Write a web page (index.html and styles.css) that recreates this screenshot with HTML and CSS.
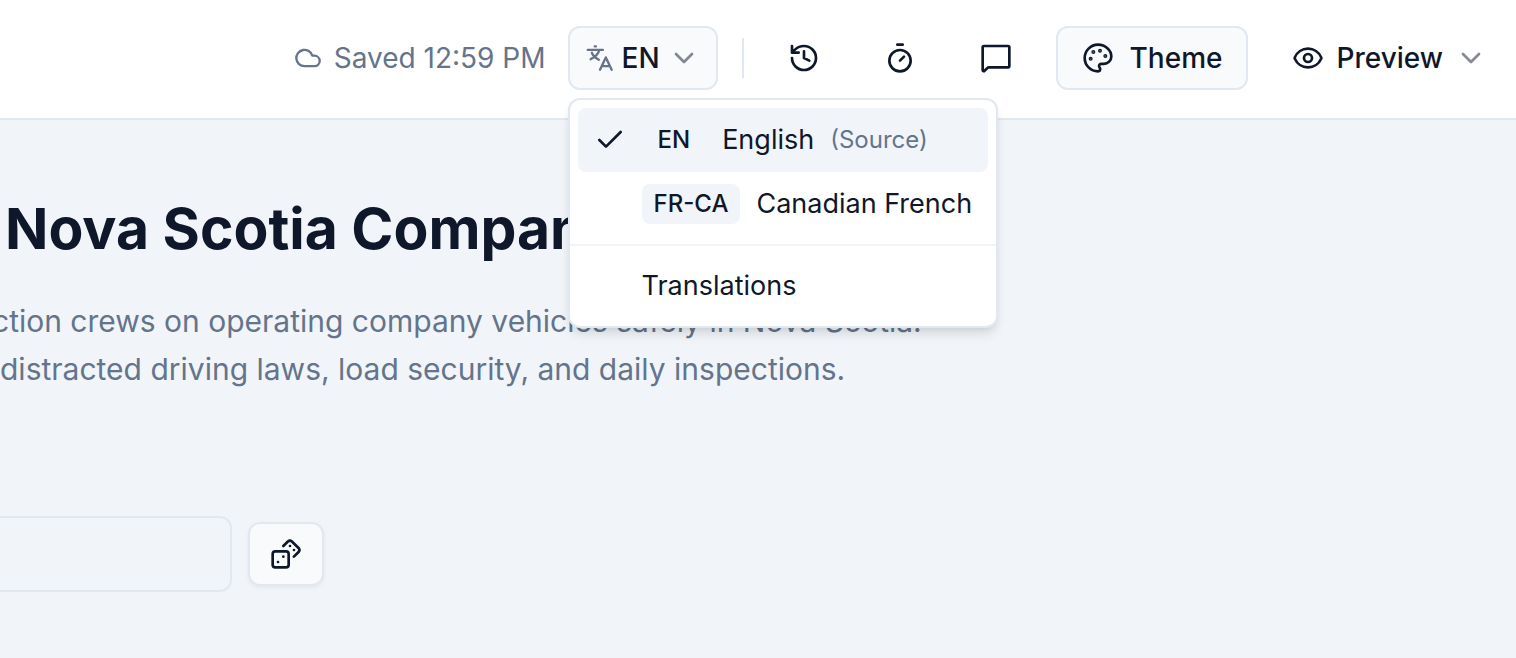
FILE: index.html
```html
<!DOCTYPE html>
<html lang="en">
<head>
<meta charset="utf-8">
<title>Course editor</title>
<link rel="stylesheet" href="styles.css">
</head>
<body>
<header class="topbar">
  <div class="saved">
    <svg class="icon icon-cloud" viewBox="0 0 24 24"><path d="M17.500 19H9a7 7 0 1 1 6.710-9h1.790a4.500 4.500 0 1 1 0 9Z"/></svg>
    <span>Saved 12:59 PM</span>
  </div>
  <div class="language">
    <button type="button" class="btn btn-lang" aria-haspopup="menu" aria-expanded="true">
      <svg class="icon icon-translate" viewBox="0 0 24 24"><path d="M1.500 5H14.500M7.500 2H8.500M11.500 5C10.500 9 7.500 11.500 4 13M5 7.500C6 10 8 12 11 13.500M12 22L17 11.500L22 22M13.500 19H20.500"/></svg>
      <span>EN</span>
      <svg class="icon chevron" viewBox="0 0 24 24"><path d="m6 9 6 6 6-6"/></svg>
    </button>
    <div class="menu" role="menu">
      <div class="menu-group">
        <button type="button" class="menu-item selected" role="menuitemradio" aria-checked="true">
          <svg class="icon check" viewBox="0 0 24 24"><path d="M20 6 9 17l-5-5"/></svg>
          <span class="badge">EN</span>
          <span>English</span>
          <span class="source">(Source)</span>
        </button>
        <button type="button" class="menu-item" role="menuitemradio" aria-checked="false">
          <span class="check"></span>
          <span class="badge">FR-CA</span>
          <span>Canadian French</span>
        </button>
      </div>
      <div class="menu-group">
        <button type="button" class="menu-item" role="menuitem">
          <span class="check"></span>
          <span>Translations</span>
        </button>
      </div>
    </div>
  </div>
  <span class="divider"></span>
  <div class="tools">
    <button type="button" class="btn btn-icon" aria-label="History">
      <svg class="icon" viewBox="0 0 24 24"><path d="M3 12a9 9 0 1 0 9-9 9.750 9.750 0 0 0-6.740 2.740L3 8M3 3v5h5M12 7v5l4 2"/></svg>
    </button>
    <button type="button" class="btn btn-icon" aria-label="Timer">
      <svg class="icon" viewBox="0 0 24 24"><path d="M10 2h4M12 14l3-3"/><circle cx="12" cy="14" r="8"/></svg>
    </button>
    <button type="button" class="btn btn-icon" aria-label="Comments">
      <svg class="icon" viewBox="0 0 24 24"><path d="M22 18a1 1 0 0 1-1 1H6.500a1 1 0 0 0-.7.3l-2.400 2.300A.8.8 0 0 1 2 21.200V4a1 1 0 0 1 1-1h18a1 1 0 0 1 1 1z"/></svg>
    </button>
  </div>
  <button type="button" class="btn btn-theme">
    <svg class="icon" viewBox="0 0 24 24"><path d="M12 2C6.500 2 2 6.500 2 12s4.500 10 10 10c.926 0 1.648-.746 1.648-1.688 0-.437-.18-.835-.437-1.125-.29-.289-.438-.652-.438-1.125a1.640 1.640 0 0 1 1.668-1.668h1.996c3.051 0 5.555-2.503 5.555-5.554C21.965 6.012 17.461 2 12 2z"/><g fill="currentColor"><circle cx="13.500" cy="6.500" r=".5"/><circle cx="17.500" cy="10.500" r=".5"/><circle cx="6.500" cy="12.500" r=".5"/><circle cx="8.500" cy="7.500" r=".5"/></g></svg>
    <span>Theme</span>
  </button>
  <button type="button" class="btn btn-preview">
    <svg class="icon" viewBox="0 0 24 24"><path d="M2.062 12.348a1 1 0 0 1 0-.696 10.750 10.750 0 0 1 19.876 0 1 1 0 0 1 0 .696 10.750 10.750 0 0 1-19.876 0"/><circle cx="12" cy="12" r="3"/></svg>
    <span>Preview</span>
    <svg class="icon chevron" viewBox="0 0 24 24"><path d="m6 9 6 6 6-6"/></svg>
  </button>
</header>
<main class="page">
  <h1 class="title">Nova Scotia Compan</h1>
  <p class="summary">ction crews on operating company vehicles safely in Nova Scotia.<br>distracted driving laws, load security, and daily inspections.</p>
  <div class="field-row">
    <input class="field" type="text" aria-label="Name">
    <button type="button" class="btn btn-dice" aria-label="Randomize">
      <svg class="icon" viewBox="0 0 24 24"><rect x="2" y="10" width="12" height="12" rx="2"/><path d="m17.920 14 3.500-3.500a2.240 2.240 0 0 0 0-3l-5-4.920a2.240 2.240 0 0 0-3 0L10 6M6 18h.01M10 14h.01M15 6h.01M18 9h.01"/></svg>
    </button>
  </div>
</main>
</body>
</html>
```

FILE: styles.css
```css
* {
  box-sizing: border-box;
}

body {
  margin: 0;
  min-height: 100vh;
  background: #f1f5f9;
  color: #0f172a;
  font-family: Inter, "Liberation Sans", sans-serif;
  font-size: 28px;
  line-height: 40px;
  overflow-x: hidden;
}

button,
input {
  margin: 0;
  font: inherit;
  color: inherit;
}

.icon {
  flex: none;
  width: 32px;
  height: 32px;
  fill: none;
  stroke: currentColor;
  stroke-width: 2;
  stroke-linecap: round;
  stroke-linejoin: round;
}

.topbar {
  display: flex;
  align-items: center;
  justify-content: flex-end;
  height: 120px;
  padding: 0 27px 2px 0;
  background: #fff;
  border-bottom: 2px solid #e2e8f0;
}

.saved {
  display: flex;
  align-items: center;
  gap: 12px;
  margin-right: 22px;
  color: #64748b;
}

.icon-cloud {
  width: 28px;
  height: 28px;
}

.btn {
  display: flex;
  align-items: center;
  height: 64px;
  padding: 0 24px;
  border: 2px solid transparent;
  border-radius: 12px;
  background: transparent;
  font-weight: 500;
}

.language {
  position: relative;
}

.btn-lang {
  padding: 0 16px;
  background: #f8fafc;
  border-color: #e2e8f0;
}

.icon-translate {
  width: 28px;
  height: 28px;
  margin-right: 8px;
  color: #64748b;
}

.chevron {
  color: #0f172a;
  opacity: 0.5;
}

.btn-lang .chevron {
  margin-left: 8px;
}

.menu {
  position: absolute;
  top: 100%;
  left: 0;
  z-index: 10;
  margin-top: 8px;
  background: #fff;
  border: 2px solid #e2e8f0;
  border-radius: 12px;
  box-shadow: 0 8px 12px -2px rgb(0 0 0 / 10%), 0 4px 8px -4px rgb(0 0 0 / 10%);
}

.menu-group {
  padding: 8px;
}

.menu-group + .menu-group {
  border-top: 2px solid #f1f5f9;
}

.menu-item {
  display: flex;
  align-items: center;
  gap: 16px;
  width: 100%;
  height: 64px;
  padding: 0 16px;
  border: 0;
  border-radius: 8px;
  background: transparent;
  font-size: 27px;
  white-space: nowrap;
}

.menu-item.selected {
  background: #f1f5f9;
}

.check {
  width: 32px;
}

.badge {
  padding: 0 12px;
  border-radius: 8px;
  background: #f1f5f9;
  font-size: 24px;
  font-weight: 500;
}

.selected .badge {
  padding: 0 16px;
}

.source {
  color: #64748b;
  font-size: 24px;
}

.divider {
  width: 2px;
  height: 40px;
  margin: 0 12px 0 24px;
  background: #e2e8f0;
}

.tools {
  display: flex;
}

.btn-icon {
  justify-content: center;
  width: 96px;
}

.btn-theme {
  gap: 16px;
  margin-left: 12px;
  background: #f8fafc;
  border-color: #e2e8f0;
}

.btn-preview {
  gap: 12px;
  margin-left: 18px;
  padding-right: 0;
}

.page {
  padding-top: 73px;
  overflow: hidden;
}

.title {
  margin: 0;
  padding-left: 5px;
  font-size: 57px;
  line-height: 72px;
  font-weight: 700;
  white-space: nowrap;
}

.summary {
  margin: 32px 0 0;
  color: #64748b;
  font-size: 30px;
  line-height: 48px;
  text-indent: -8px;
  white-space: nowrap;
}

.field-row {
  display: flex;
  align-items: center;
  gap: 16px;
  margin-top: 123px;
}

.field {
  width: 248px;
  height: 76px;
  margin-left: -16px;
  padding: 0 24px;
  background: #f1f5f9;
  border: 2px solid #e2e8f0;
  border-radius: 12px;
}

.btn-dice {
  padding: 0 20px;
  background: #f8fafc;
  border-color: #e2e8f0;
  box-shadow: 0 2px 4px rgb(0 0 0 / 5%);
}
```
